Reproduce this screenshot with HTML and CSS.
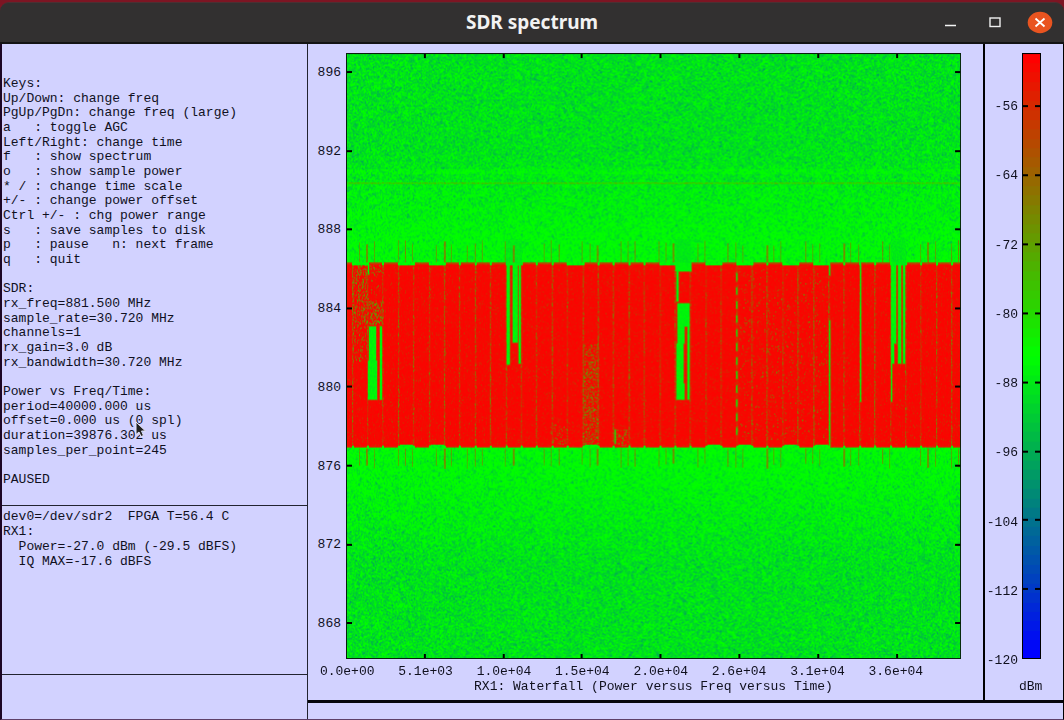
FILE: index.html
```html
<!DOCTYPE html>
<html lang="en">
<head>
<meta charset="utf-8">
<title>SDR spectrum</title>
<link rel="stylesheet" href="styles.css">
</head>
<body>
<div class="window">
  <header class="titlebar">
    <h1 class="title">SDR spectrum</h1>
    <div class="controls">
      <button class="control" type="button" aria-label="Minimize"><svg width="26" height="26" viewBox="0 0 26 26"><path d="M8 15.5h11" stroke="#f4f4f4" stroke-width="1.5"/></svg></button>
      <button class="control" type="button" aria-label="Maximize"><svg width="26" height="26" viewBox="0 0 26 26"><rect x="8" y="8" width="10" height="8.500" fill="none" stroke="#f0f0f0" stroke-width="1.4"/></svg></button>
      <button class="control" type="button" aria-label="Close"><svg width="26" height="26" viewBox="0 0 26 26"><ellipse cx="13" cy="12.500" rx="12.300" ry="10.700" fill="#e95420"/><path d="M8.500 8.500l9 8M17.500 8.500l-9 8" stroke="#fff" stroke-width="1.8"/></svg></button>
    </div>
  </header>
  <main class="content">
    <aside class="sidebar">
      <section class="panel info">
        <div class="line">Keys:</div>
        <div class="line">Up/Down: change freq</div>
        <div class="line">PgUp/PgDn: change freq (large)</div>
        <div class="line">a   : toggle AGC</div>
        <div class="line">Left/Right: change time</div>
        <div class="line">f   : show spectrum</div>
        <div class="line">o   : show sample power</div>
        <div class="line">* / : change time scale</div>
        <div class="line">+/- : change power offset</div>
        <div class="line">Ctrl +/- : chg power range</div>
        <div class="line">s   : save samples to disk</div>
        <div class="line">p   : pause   n: next frame</div>
        <div class="line">q   : quit</div>
        <div class="line"></div>
        <div class="line">SDR:</div>
        <div class="line">rx_freq=881.500 MHz</div>
        <div class="line">sample_rate=30.720 MHz</div>
        <div class="line">channels=1</div>
        <div class="line">rx_gain=3.0 dB</div>
        <div class="line">rx_bandwidth=30.720 MHz</div>
        <div class="line"></div>
        <div class="line">Power vs Freq/Time:</div>
        <div class="line">period=40000.000 us</div>
        <div class="line">offset=0.000 us (0 spl)</div>
        <div class="line">duration=39876.302 us</div>
        <div class="line">samples_per_point=245</div>
        <div class="line"></div>
        <div class="line">PAUSED</div>
        <svg class="cursor" width="12" height="18" viewBox="0 0 12 18"><path d="M1 1v12.500l3-2.500 2 4.500 2.500-1-2-4.500h4z" fill="#222" stroke="#e8e8f8" stroke-width="1"/></svg>
      </section>
      <section class="panel device">
        <div class="line">dev0=/dev/sdr2  FPGA T=56.4 C</div>
        <div class="line">RX1:</div>
        <div class="line">  Power=-27.0 dBm (-29.5 dBFS)</div>
        <div class="line">  IQ MAX=-17.6 dBFS</div>
      </section>
      <section class="panel empty"></section>
    </aside>
    <div class="display">
      <div class="charts">
        <figure class="waterfall">
          <div class="freq-axis">
            <span>896</span><span>892</span><span>888</span><span>884</span><span>880</span><span>876</span><span>872</span><span>868</span>
          </div>
          <canvas class="plot" id="plot" width="616" height="605"></canvas>
          <div class="time-axis">
            <span>0.0e+00</span><span>5.1e+03</span><span>1.0e+04</span><span>1.5e+04</span><span>2.0e+04</span><span>2.6e+04</span><span>3.1e+04</span><span>3.6e+04</span>
          </div>
          <figcaption class="caption">RX1: Waterfall (Power versus Freq versus Time)</figcaption>
        </figure>
        <div class="scale">
          <div class="scale-labels">
            <span>-56</span><span>-64</span><span>-72</span><span>-80</span><span>-88</span><span>-96</span><span>-104</span><span>-112</span><span>-120</span>
          </div>
          <canvas class="bar" id="bar" width="19" height="605"></canvas>
          <div class="unit">dBm</div>
        </div>
      </div>
      <div class="status"></div>
    </div>
  </main>
</div>
<script src="plot.js"></script>
</body>
</html>
```

FILE: styles.css
```css
* {
  box-sizing: border-box;
}

body {
  margin: 0;
  background: #7d1523;
}

.window {
  display: flex;
  flex-direction: column;
  min-height: 100vh;
  padding-top: 2px;
  font-family: "Liberation Mono", "DejaVu Sans Mono", monospace;
  font-size: 13px;
  line-height: 15px;
  color: #10101e;
}

.titlebar {
  display: grid;
  grid-template-columns: 1fr auto 1fr;
  align-items: center;
  height: 42px;
  background: #323030;
  border-top: 1px solid #4a3033;
  border-bottom: 2px solid #141414;
  border-radius: 9px 9px 0 0;
}

.title {
  grid-column: 2;
  margin: 0;
  padding-bottom: 2px;
  font: bold 19px/24px "Noto Sans", "Open Sans", sans-serif;
  color: #f2f2f2;
}

.controls {
  display: flex;
  justify-content: flex-end;
  gap: 19px;
  padding-right: 11px;
}

.control {
  display: flex;
  padding: 0;
  border: 0;
  background: none;
}

.content {
  flex: 1;
  display: grid;
  grid-template-columns: 306px 1fr;
  background: #d2d2ff;
  border-left: 2px solid #1c0625;
  border-right: 1px solid #000;
  border-bottom: 1px solid #5e4068;
}

.sidebar {
  display: grid;
  grid-template-rows: 462fr 169fr 44fr;
  border-right: 1px solid #222430;
}

.panel {
  display: flex;
  flex-direction: column;
  padding-left: 1px;
  border-bottom: 1px solid #222430;
}

.panel.empty {
  border-bottom: 0;
}

.line {
  flex: 1;
  white-space: pre;
}

.info {
  position: relative;
  padding-top: 32px;
  padding-bottom: 18px;
}

.info .line {
  min-height: 0;
  flex-basis: 0;
}

.device {
  padding-top: 3px;
}

.device .line {
  flex: none;
}

.cursor {
  position: absolute;
  left: 133px;
  top: 377px;
}

.display {
  display: flex;
  flex-direction: column;
}

.charts {
  flex: 1;
  display: grid;
  grid-template-columns: 1fr 78px;
  border-bottom: 3px solid #06060c;
}

.waterfall {
  display: grid;
  grid-template-columns: 38px 1fr;
  grid-template-rows: 1fr 17px 15px;
  margin: 0;
  padding: 9px 22px 9px 0;
  border-right: 2px solid #000;
}

.freq-axis {
  display: flex;
  flex-direction: column;
  justify-content: space-between;
  align-items: flex-end;
  padding: 12px 5px 28px 0;
}

.plot {
  display: block;
  width: 100%;
  height: 100%;
  min-height: 0;
}

.time-axis {
  grid-column: 1 / 3;
  display: grid;
  grid-template-columns: repeat(8, 1fr);
  margin-right: 26px;
  padding-top: 5px;
  text-align: center;
}

.caption {
  grid-column: 2;
  padding-top: 3px;
  text-align: center;
}

.scale {
  display: grid;
  grid-template-columns: 33px 19px;
  grid-template-rows: 1fr 32px;
  column-gap: 4px;
  padding: 9px 0;
}

.scale-labels {
  display: flex;
  flex-direction: column;
  justify-content: space-between;
  align-items: flex-end;
  margin-bottom: -9px;
  padding-top: 46px;
}

.bar {
  display: block;
  width: 100%;
  height: 100%;
  min-height: 0;
}

.unit {
  grid-column: 1 / 3;
  padding-top: 20px;
  padding-left: 34px;
}

.status {
  height: 16px;
}
```

FILE: plot.js
```js
(function () {
  var LEFT = 346, TOP = 54;
  var canvas = document.getElementById('plot');
  var ctx = canvas.getContext('2d');
  var W = canvas.width, H = canvas.height;
  var level = new Float32Array(W * H);
  var seed = 12345;

  function rnd() {
    seed = (seed * 1664525 + 1013904223) >>> 0;
    return seed / 4294967296;
  }

  // Power level 0..1 to blue - green - red.
  function color(v) {
    v = Math.max(0, Math.min(1, v));
    return v < 0.5 ? [0, 510 * v, 255 - 510 * v] : [510 * v - 255, 510 - 510 * v, 0];
  }

  function fill(x0, y0, x1, y1, fn) {
    x0 = Math.max(0, Math.round(x0 - LEFT));
    x1 = Math.min(W, Math.round(x1 - LEFT));
    y0 = Math.max(0, Math.round(y0 - TOP));
    y1 = Math.min(H, Math.round(y1 - TOP));
    for (var y = y0; y < y1; y++) {
      for (var x = x0; x < x1; x++) {
        level[y * W + x] = fn(level[y * W + x], x + LEFT, y + TOP);
      }
    }
  }

  // Noise with a grain slightly larger than one pixel.
  var NW = W + 1;
  var noise = new Float32Array(NW * (H + 1));
  for (var n = 0; n < noise.length; n++) {
    noise[n] = (rnd() + rnd() + rnd() - 1.5) * 0.11 - (rnd() < 0.05 ? 0.12 * rnd() : 0);
  }
  function grain(x, y) {
    var i = (y - TOP) * NW + x - LEFT;
    return (noise[i] + noise[i + NW]) * 0.35 + (noise[i + 1] + noise[i + NW + 1]) * 0.2;
  }

  // Noise floor, quieter away from the carrier.
  fill(LEFT, TOP, LEFT + W, TOP + H, function (v, x, y) {
    var d = y < 355 ? 263 - y : y - 448;
    var mean = 0.493 - 0.047 * Math.min(1, Math.max(0, (d - 20) / 95));
    return Math.min(0.503, mean + grain(x, y));
  });
  fill(LEFT, 170, LEFT + W, 175, function (v) { return Math.min(0.505, v + 0.03); });
  fill(LEFT, 183, LEFT + W, 185, function () { return 0.52 + rnd() * 0.12; });

  // Carrier slots.
  var START = 352.5, STEP = 15.4;
  var lowTop = [0, 3, 5, 10, 14, 20, 21, 23, 25, 28, 30, 35];
  var shortBottom = [3, 5, 15, 23, 25, 28, 30];
  var k, x;
  for (k = -1; k < 40; k++) {
    x = START + k * STEP;
    var top = lowTop.indexOf(k) >= 0 ? 266 : 263;
    var bottom = shortBottom.indexOf(k) >= 0 ? 445 : 448;
    fill(x, top, x + STEP, bottom, function (v, px, py) {
      var edge = py < 265 || py > 446 ? 0.12 : 0;
      var dip = rnd() < 0.08 ? rnd() * 0.11 : 0;
      return 1 - edge - rnd() * 0.03 - dip;
    });
    fill(x - 1, 263, x + 1, 266, function () { return 0.5; });
    fill(x - 1, 446, x + 1, 449, function () { return 0.5; });
    var rate = 0.1 + 0.4 * rnd();
    fill(x - 1, 266, x, 446, function () {
      return rnd() < rate ? 0.72 + rnd() * 0.12 : 0.88 + rnd() * 0.09;
    });
    fill(x, 266, x + 1, 446, function () {
      return rnd() < rate / 3 ? 0.8 + rnd() * 0.1 : 0.93 + rnd() * 0.06;
    });
  }

  // Bursts past the edges of the carrier.
  var spikes = [359, 366, 373.5, 397.5, 405, 412, 436, 443.5, 450.5, 466.5, 474.5, 481.5,
    505, 512.5, 543.5, 551, 559, 582, 589.5, 596.5, 620.5, 628, 635, 659, 666, 673,
    698, 704.5, 728, 736, 742.5, 766.5, 774, 781, 805.5, 812.5, 820, 844, 851, 858.5,
    882.5, 890, 920.5, 927.5, 935.5, 952, 959];
  spikes.forEach(function (sx, i) {
    var strong = i % 3 === 1 ? 0.1 : 0.05;
    var wide = i % 6 === 1 ? 2 : 1;
    fill(sx, 241 + rnd() * 5, sx + wide, 263, function () { return 0.56 + strong + rnd() * 0.1; });
    fill(sx, 449, sx + wide, 464 + rnd() * 5, function () { return 0.56 + strong + rnd() * 0.1; });
  });

  function speckle(x0, y0, x1, y1, density) {
    fill(x0, y0, x1, y1, function (v) {
      return rnd() < density ? 0.65 + rnd() * 0.25 : v;
    });
  }
  speckle(352, 266, 368, 325, 0.34);
  speckle(368, 302, 384, 325, 0.42);
  speckle(368, 266, 384, 274, 0.26);
  speckle(368, 274, 384, 302, 0.06);
  speckle(352, 325, 368, 362, 0.18);
  speckle(583, 345, 599, 445, 0.38);
  speckle(615, 430, 629, 446, 0.3);
  speckle(740, 270, 830, 440, 0.035);
  speckle(550, 425, 570, 445, 0.12);

  // Idle resource blocks: green gaps inside the carrier.
  function gap(x0, y0, x1, y1) {
    fill(x0 - 1, y0 - 1, x1 + 1, y1 + 1, function (v) { return Math.min(v, 0.82 + rnd() * 0.08); });
    fill(x0, y0, x1, y1, function () { return 0.455 + rnd() * 0.05; });
  }
  // Lower floor above the idle slots.
  [[506, 522], [676, 692], [892, 907]].forEach(function (r) {
    fill(r[0], 240, r[1], 266, function (v) { return v > 0.51 && v < 0.85 ? v : 0.43 + rnd() * 0.06; });
  });
  gap(369, 327, 376, 361);
  gap(368, 361, 377, 400);
  gap(380, 327, 382, 400);
  gap(507, 264, 510, 365);
  gap(513, 264, 518, 343);
  gap(519, 264, 521, 364);
  gap(368, 264, 369, 275);
  gap(615, 430, 616, 444);
  gap(676, 263, 692, 272);
  gap(677, 272, 679, 302);
  gap(678, 304, 690, 327);
  gap(678, 327, 685, 344);
  gap(677, 344, 684, 400);
  gap(688, 327, 690, 400);
  gap(684, 384, 685, 400);
  gap(830, 263, 831, 276);
  gap(830, 321, 831, 446);
  gap(861, 263, 862, 402);
  gap(892, 263, 897, 344);
  gap(892, 344, 895, 364);
  gap(892, 364, 893, 402);
  gap(899, 264, 902, 364);
  gap(904, 264, 906, 364);
  for (var y = 274; y < 440; y += 14) gap(737, y, 738, y + 7);

  var image = ctx.createImageData(W, H);
  for (var i = 0; i < level.length; i++) {
    var c = color(level[i]);
    image.data[i * 4] = c[0];
    image.data[i * 4 + 1] = c[1];
    image.data[i * 4 + 2] = c[2];
    image.data[i * 4 + 3] = 255;
  }
  ctx.putImageData(image, 0, 0);

  // Frame and tick marks.
  ctx.fillStyle = '#000';
  for (k = 0; k < 8; k++) {
    var tx = Math.round(k * 78.8);
    ctx.fillRect(tx - 1, 0, 2, 5);
    ctx.fillRect(tx - 1, H - 5, 2, 5);
    var ty = Math.round(18 + k * 78.6);
    ctx.fillRect(0, ty, 6, 2);
    ctx.fillRect(W - 6, ty, 6, 2);
  }
  ctx.strokeStyle = '#08200c';
  ctx.strokeRect(0.5, 0.5, W - 1, H - 1);

  var bar = document.getElementById('bar');
  var b = bar.getContext('2d');
  for (y = 0; y < bar.height; y++) {
    var step = Math.floor(y / 9.45) / 63;
    b.fillStyle = 'rgb(' + color(1 - step).map(Math.round).join(',') + ')';
    b.fillRect(0, y, bar.width, 1);
  }
  b.fillStyle = '#000';
  for (k = 0; k < 8; k++) {
    ty = Math.round(52 + k * 68.9);
    b.fillRect(0, ty, 6, 2);
    b.fillRect(bar.width - 6, ty, 6, 2);
  }
  b.strokeRect(0.5, 0.5, bar.width - 1, bar.height - 1);
})();
```
